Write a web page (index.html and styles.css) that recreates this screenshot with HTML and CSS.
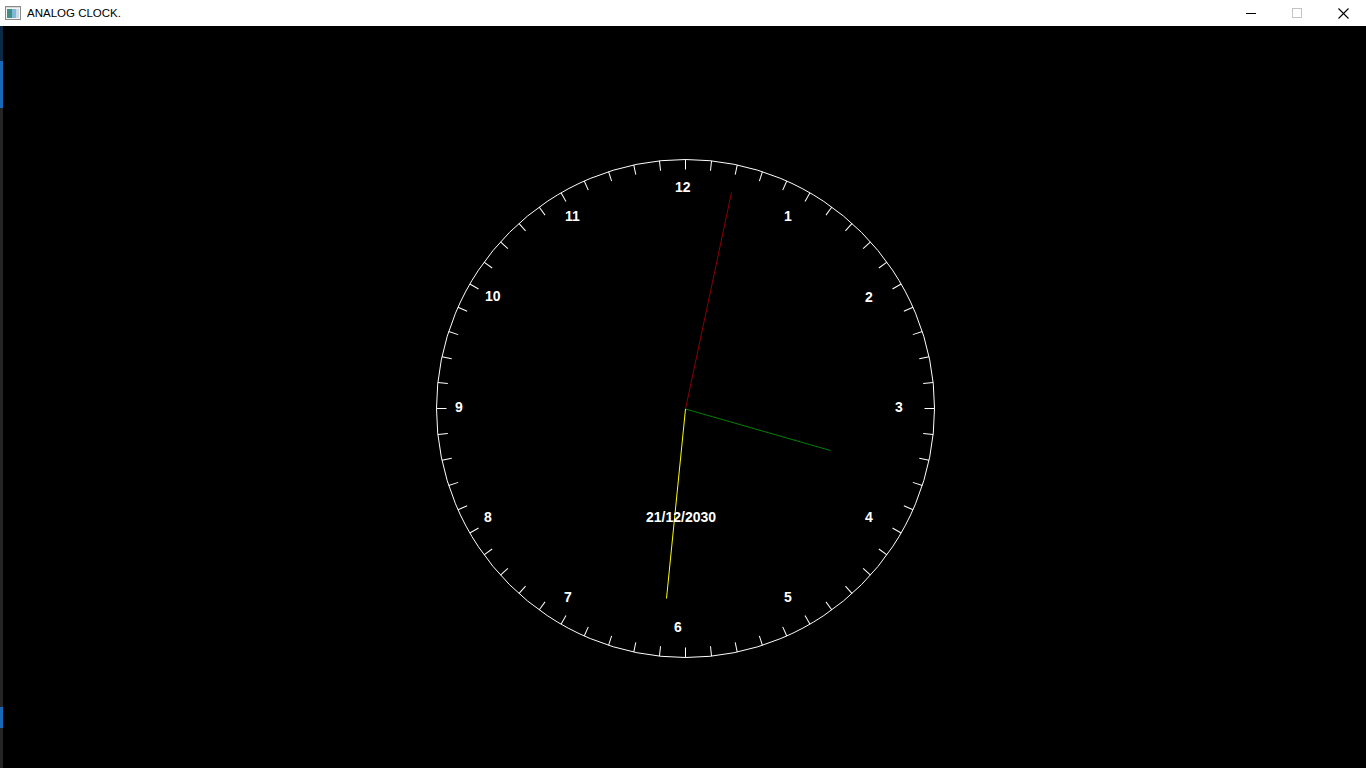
FILE: index.html
```html
<!DOCTYPE html>
<html lang="en">
<head>
<meta charset="utf-8">
<title>ANALOG CLOCK.</title>
<link rel="stylesheet" href="styles.css">
</head>
<body>
<div class="window">
  <header class="titlebar">
    <div class="title-left">
      <svg class="app-icon" width="16" height="16" viewBox="0 0 16 16">
        <rect x="0.5" y="1.5" width="15" height="13" fill="#f4f4f4" stroke="#8a8a8a"/>
        <rect x="2" y="4" width="5" height="9" fill="#3f8f86"/>
        <rect x="7" y="4" width="4" height="9" fill="#7fb7d6"/>
        <rect x="11" y="4" width="3" height="9" fill="#c9d9e6"/>
        <rect x="1" y="2" width="14" height="1" fill="#d8d8d8"/>
      </svg>
      <span class="title">ANALOG CLOCK.</span>
    </div>
    <div class="controls">
      <div class="ctl">
        <svg width="10" height="10" viewBox="0 0 10 10"><line x1="0" y1="5.5" x2="10" y2="5.5" stroke="#000"/></svg>
      </div>
      <div class="ctl">
        <svg width="10" height="10" viewBox="0 0 10 10"><rect x="0.5" y="0.5" width="9" height="9" fill="none" stroke="#c4c4c4"/></svg>
      </div>
      <div class="ctl">
        <svg width="11" height="11" viewBox="0 0 11 11"><path d="M0.5 0.5 L10.5 10.5 M10.5 0.5 L0.5 10.5" stroke="#000" stroke-width="1.1"/></svg>
      </div>
    </div>
  </header>
  <div class="content">
    <div class="desk-strip">
      <div class="seg seg-navy"></div>
      <div class="seg seg-blue1"></div>
      <div class="seg seg-gray1"></div>
      <div class="seg seg-blue2"></div>
      <div class="seg seg-gray2"></div>
    </div>
    <main class="canvas">
      <svg class="clock" width="1363" height="742" viewBox="3 26 1363 742">
        <circle cx="685.5" cy="408.5" r="249" fill="none" stroke="#fff" stroke-width="1"/>
        <g class="ticks" stroke="#fff" stroke-width="1">
          <line x1="685.5" y1="159.5" x2="685.5" y2="169.5" transform="rotate(0 685.5 408.5)"/>
          <line x1="685.5" y1="159.5" x2="685.5" y2="169.5" transform="rotate(6 685.5 408.5)"/>
          <line x1="685.5" y1="159.5" x2="685.5" y2="169.5" transform="rotate(12 685.5 408.5)"/>
          <line x1="685.5" y1="159.5" x2="685.5" y2="169.5" transform="rotate(18 685.5 408.5)"/>
          <line x1="685.5" y1="159.5" x2="685.5" y2="169.5" transform="rotate(24 685.5 408.5)"/>
          <line x1="685.5" y1="159.5" x2="685.5" y2="169.5" transform="rotate(30 685.5 408.5)"/>
          <line x1="685.5" y1="159.5" x2="685.5" y2="169.5" transform="rotate(36 685.5 408.5)"/>
          <line x1="685.5" y1="159.5" x2="685.5" y2="169.5" transform="rotate(42 685.5 408.5)"/>
          <line x1="685.5" y1="159.5" x2="685.5" y2="169.5" transform="rotate(48 685.5 408.5)"/>
          <line x1="685.5" y1="159.5" x2="685.5" y2="169.5" transform="rotate(54 685.5 408.5)"/>
          <line x1="685.5" y1="159.5" x2="685.5" y2="169.5" transform="rotate(60 685.5 408.5)"/>
          <line x1="685.5" y1="159.5" x2="685.5" y2="169.5" transform="rotate(66 685.5 408.5)"/>
          <line x1="685.5" y1="159.5" x2="685.5" y2="169.5" transform="rotate(72 685.5 408.5)"/>
          <line x1="685.5" y1="159.5" x2="685.5" y2="169.5" transform="rotate(78 685.5 408.5)"/>
          <line x1="685.5" y1="159.5" x2="685.5" y2="169.5" transform="rotate(84 685.5 408.5)"/>
          <line x1="685.5" y1="159.5" x2="685.5" y2="169.5" transform="rotate(90 685.5 408.5)"/>
          <line x1="685.5" y1="159.5" x2="685.5" y2="169.5" transform="rotate(96 685.5 408.5)"/>
          <line x1="685.5" y1="159.5" x2="685.5" y2="169.5" transform="rotate(102 685.5 408.5)"/>
          <line x1="685.5" y1="159.5" x2="685.5" y2="169.5" transform="rotate(108 685.5 408.5)"/>
          <line x1="685.5" y1="159.5" x2="685.5" y2="169.5" transform="rotate(114 685.5 408.5)"/>
          <line x1="685.5" y1="159.5" x2="685.5" y2="169.5" transform="rotate(120 685.5 408.5)"/>
          <line x1="685.5" y1="159.5" x2="685.5" y2="169.5" transform="rotate(126 685.5 408.5)"/>
          <line x1="685.5" y1="159.5" x2="685.5" y2="169.5" transform="rotate(132 685.5 408.5)"/>
          <line x1="685.5" y1="159.5" x2="685.5" y2="169.5" transform="rotate(138 685.5 408.5)"/>
          <line x1="685.5" y1="159.5" x2="685.5" y2="169.5" transform="rotate(144 685.5 408.5)"/>
          <line x1="685.5" y1="159.5" x2="685.5" y2="169.5" transform="rotate(150 685.5 408.5)"/>
          <line x1="685.5" y1="159.5" x2="685.5" y2="169.5" transform="rotate(156 685.5 408.5)"/>
          <line x1="685.5" y1="159.5" x2="685.5" y2="169.5" transform="rotate(162 685.5 408.5)"/>
          <line x1="685.5" y1="159.5" x2="685.5" y2="169.5" transform="rotate(168 685.5 408.5)"/>
          <line x1="685.5" y1="159.5" x2="685.5" y2="169.5" transform="rotate(174 685.5 408.5)"/>
          <line x1="685.5" y1="159.5" x2="685.5" y2="169.5" transform="rotate(180 685.5 408.5)"/>
          <line x1="685.5" y1="159.5" x2="685.5" y2="169.5" transform="rotate(186 685.5 408.5)"/>
          <line x1="685.5" y1="159.5" x2="685.5" y2="169.5" transform="rotate(192 685.5 408.5)"/>
          <line x1="685.5" y1="159.5" x2="685.5" y2="169.5" transform="rotate(198 685.5 408.5)"/>
          <line x1="685.5" y1="159.5" x2="685.5" y2="169.5" transform="rotate(204 685.5 408.5)"/>
          <line x1="685.5" y1="159.5" x2="685.5" y2="169.5" transform="rotate(210 685.5 408.5)"/>
          <line x1="685.5" y1="159.5" x2="685.5" y2="169.5" transform="rotate(216 685.5 408.5)"/>
          <line x1="685.5" y1="159.5" x2="685.5" y2="169.5" transform="rotate(222 685.5 408.5)"/>
          <line x1="685.5" y1="159.5" x2="685.5" y2="169.5" transform="rotate(228 685.5 408.5)"/>
          <line x1="685.5" y1="159.5" x2="685.5" y2="169.5" transform="rotate(234 685.5 408.5)"/>
          <line x1="685.5" y1="159.5" x2="685.5" y2="169.5" transform="rotate(240 685.5 408.5)"/>
          <line x1="685.5" y1="159.5" x2="685.5" y2="169.5" transform="rotate(246 685.5 408.5)"/>
          <line x1="685.5" y1="159.5" x2="685.5" y2="169.5" transform="rotate(252 685.5 408.5)"/>
          <line x1="685.5" y1="159.5" x2="685.5" y2="169.5" transform="rotate(258 685.5 408.5)"/>
          <line x1="685.5" y1="159.5" x2="685.5" y2="169.5" transform="rotate(264 685.5 408.5)"/>
          <line x1="685.5" y1="159.5" x2="685.5" y2="169.5" transform="rotate(270 685.5 408.5)"/>
          <line x1="685.5" y1="159.5" x2="685.5" y2="169.5" transform="rotate(276 685.5 408.5)"/>
          <line x1="685.5" y1="159.5" x2="685.5" y2="169.5" transform="rotate(282 685.5 408.5)"/>
          <line x1="685.5" y1="159.5" x2="685.5" y2="169.5" transform="rotate(288 685.5 408.5)"/>
          <line x1="685.5" y1="159.5" x2="685.5" y2="169.5" transform="rotate(294 685.5 408.5)"/>
          <line x1="685.5" y1="159.5" x2="685.5" y2="169.5" transform="rotate(300 685.5 408.5)"/>
          <line x1="685.5" y1="159.5" x2="685.5" y2="169.5" transform="rotate(306 685.5 408.5)"/>
          <line x1="685.5" y1="159.5" x2="685.5" y2="169.5" transform="rotate(312 685.5 408.5)"/>
          <line x1="685.5" y1="159.5" x2="685.5" y2="169.5" transform="rotate(318 685.5 408.5)"/>
          <line x1="685.5" y1="159.5" x2="685.5" y2="169.5" transform="rotate(324 685.5 408.5)"/>
          <line x1="685.5" y1="159.5" x2="685.5" y2="169.5" transform="rotate(330 685.5 408.5)"/>
          <line x1="685.5" y1="159.5" x2="685.5" y2="169.5" transform="rotate(336 685.5 408.5)"/>
          <line x1="685.5" y1="159.5" x2="685.5" y2="169.5" transform="rotate(342 685.5 408.5)"/>
          <line x1="685.5" y1="159.5" x2="685.5" y2="169.5" transform="rotate(348 685.5 408.5)"/>
          <line x1="685.5" y1="159.5" x2="685.5" y2="169.5" transform="rotate(354 685.5 408.5)"/>
        </g>
        <g class="numerals">
          <text x="675" y="192">12</text>
          <text x="784" y="221">1</text>
          <text x="865" y="302">2</text>
          <text x="895" y="412">3</text>
          <text x="865" y="522">4</text>
          <text x="784" y="602">5</text>
          <text x="674" y="632">6</text>
          <text x="564" y="602">7</text>
          <text x="484" y="522">8</text>
          <text x="455" y="412">9</text>
          <text x="485" y="301">10</text>
          <text x="565" y="221">11</text>
        </g>
        <line class="hand" x1="685.5" y1="409" x2="731.5" y2="192.5" stroke="#8b0000"/>
        <line class="hand" x1="685.5" y1="409" x2="830.5" y2="450.5" stroke="#008000"/>
        <line class="hand" x1="685.5" y1="409" x2="666.5" y2="598.5" stroke="#ffff00"/>
        <text class="date" x="646" y="522">21/12/2030</text>
      </svg>
    </main>
  </div>
</div>
</body>
</html>
```

FILE: styles.css
```css
html, body {
  margin: 0;
  padding: 0;
  width: 1366px;
  height: 768px;
  overflow: hidden;
  background: #000;
}

.window {
  display: flex;
  flex-direction: column;
  width: 1366px;
  height: 768px;
}

.titlebar {
  height: 26px;
  flex: 0 0 26px;
  background: #fff;
  display: flex;
  align-items: center;
  justify-content: space-between;
}

.title-left {
  display: flex;
  align-items: center;
  gap: 6px;
  padding-left: 5px;
}

.app-icon {
  display: block;
}

.title {
  font-family: "Liberation Sans", Arial, sans-serif;
  font-size: 11.5px;
  color: #000;
  letter-spacing: 0;
}

.controls {
  display: flex;
  height: 26px;
}

.ctl {
  width: 46px;
  height: 26px;
  display: flex;
  align-items: center;
  justify-content: center;
}

.ctl svg {
  display: block;
}

.content {
  flex: 1;
  display: flex;
  min-height: 0;
}

.desk-strip {
  width: 3px;
  flex: 0 0 3px;
  display: flex;
  flex-direction: column;
}

.seg-navy { height: 35px; background: #0c2a47; }
.seg-blue1 { height: 47px; background: #1769b8; }
.seg-gray1 { height: 599px; background: #252525; }
.seg-blue2 { height: 21px; background: #1769b8; }
.seg-gray2 { flex: 1; background: #252525; }

.canvas {
  flex: 1;
  background: #000;
  overflow: hidden;
}

.clock {
  display: block;
}

.numerals text,
.date {
  font-family: "Liberation Sans", Arial, sans-serif;
  font-weight: bold;
  font-size: 14px;
  fill: #fff;
}

.hand {
  stroke-width: 1;
}
```
